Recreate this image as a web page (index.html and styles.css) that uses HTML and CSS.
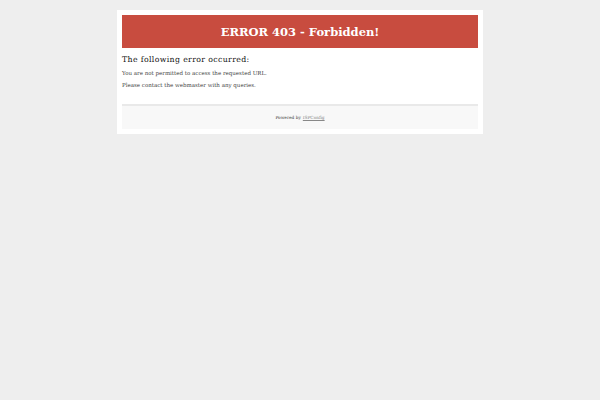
FILE: index.html
```html
<!DOCTYPE html>
<html>
<head>
<meta charset="utf-8">
<link rel="stylesheet" href="styles.css">
<title>ERROR 403 - Forbidden!</title>
</head>
<body>
<div class="box">
  <div class="header"><h1>ERROR 403 - Forbidden!</h1></div>
  <div class="content">
    <h2>The following error occurred:</h2>
    <p>You are not permitted to access the requested URL.</p>
    <p>Please contact the webmaster with any queries.</p>
  </div>
  <div class="footer">Powered by <a href="#">ISPConfig</a></div>
</div>
</body>
</html>
```
FILE: styles.css
```css
html, body {
  margin: 0;
  padding: 0;
  background: #eeeeee;
  font-family: "DejaVu Serif", serif;
  color: #333;
}
.box {
  width: 356px;
  margin: 10px auto 0;
  padding: 5px;
  background: #fff;
}
.header {
  height: 33px;
  background: #c84c3f;
  display: flex;
  align-items: center;
  justify-content: center;
}
.header h1 {
  margin: 0;
  color: #fff;
  font-size: 11.5px;
  font-weight: bold;
}
.content {
  padding: 7px 0 15px;
}
.content h2 {
  margin: 0 0 4px;
  font-size: 7.8px;
  letter-spacing: 0.35px;
  font-weight: normal;
  color: #111;
  line-height: 10px;
}
.content p {
  margin: 0 0 4px;
  font-size: 5.5px;
  line-height: 8px;
  color: #444;
}
.content p:last-child {
  margin-bottom: 0;
}
.footer {
  border-top: 2px solid #e9e9e9;
  background: #f8f8f8;
  height: 23px;
  display: flex;
  align-items: center;
  justify-content: center;
  font-size: 4.3px;
  color: #444;
}
.footer a {
  color: #888;
  margin-left: 2px;
}
```
